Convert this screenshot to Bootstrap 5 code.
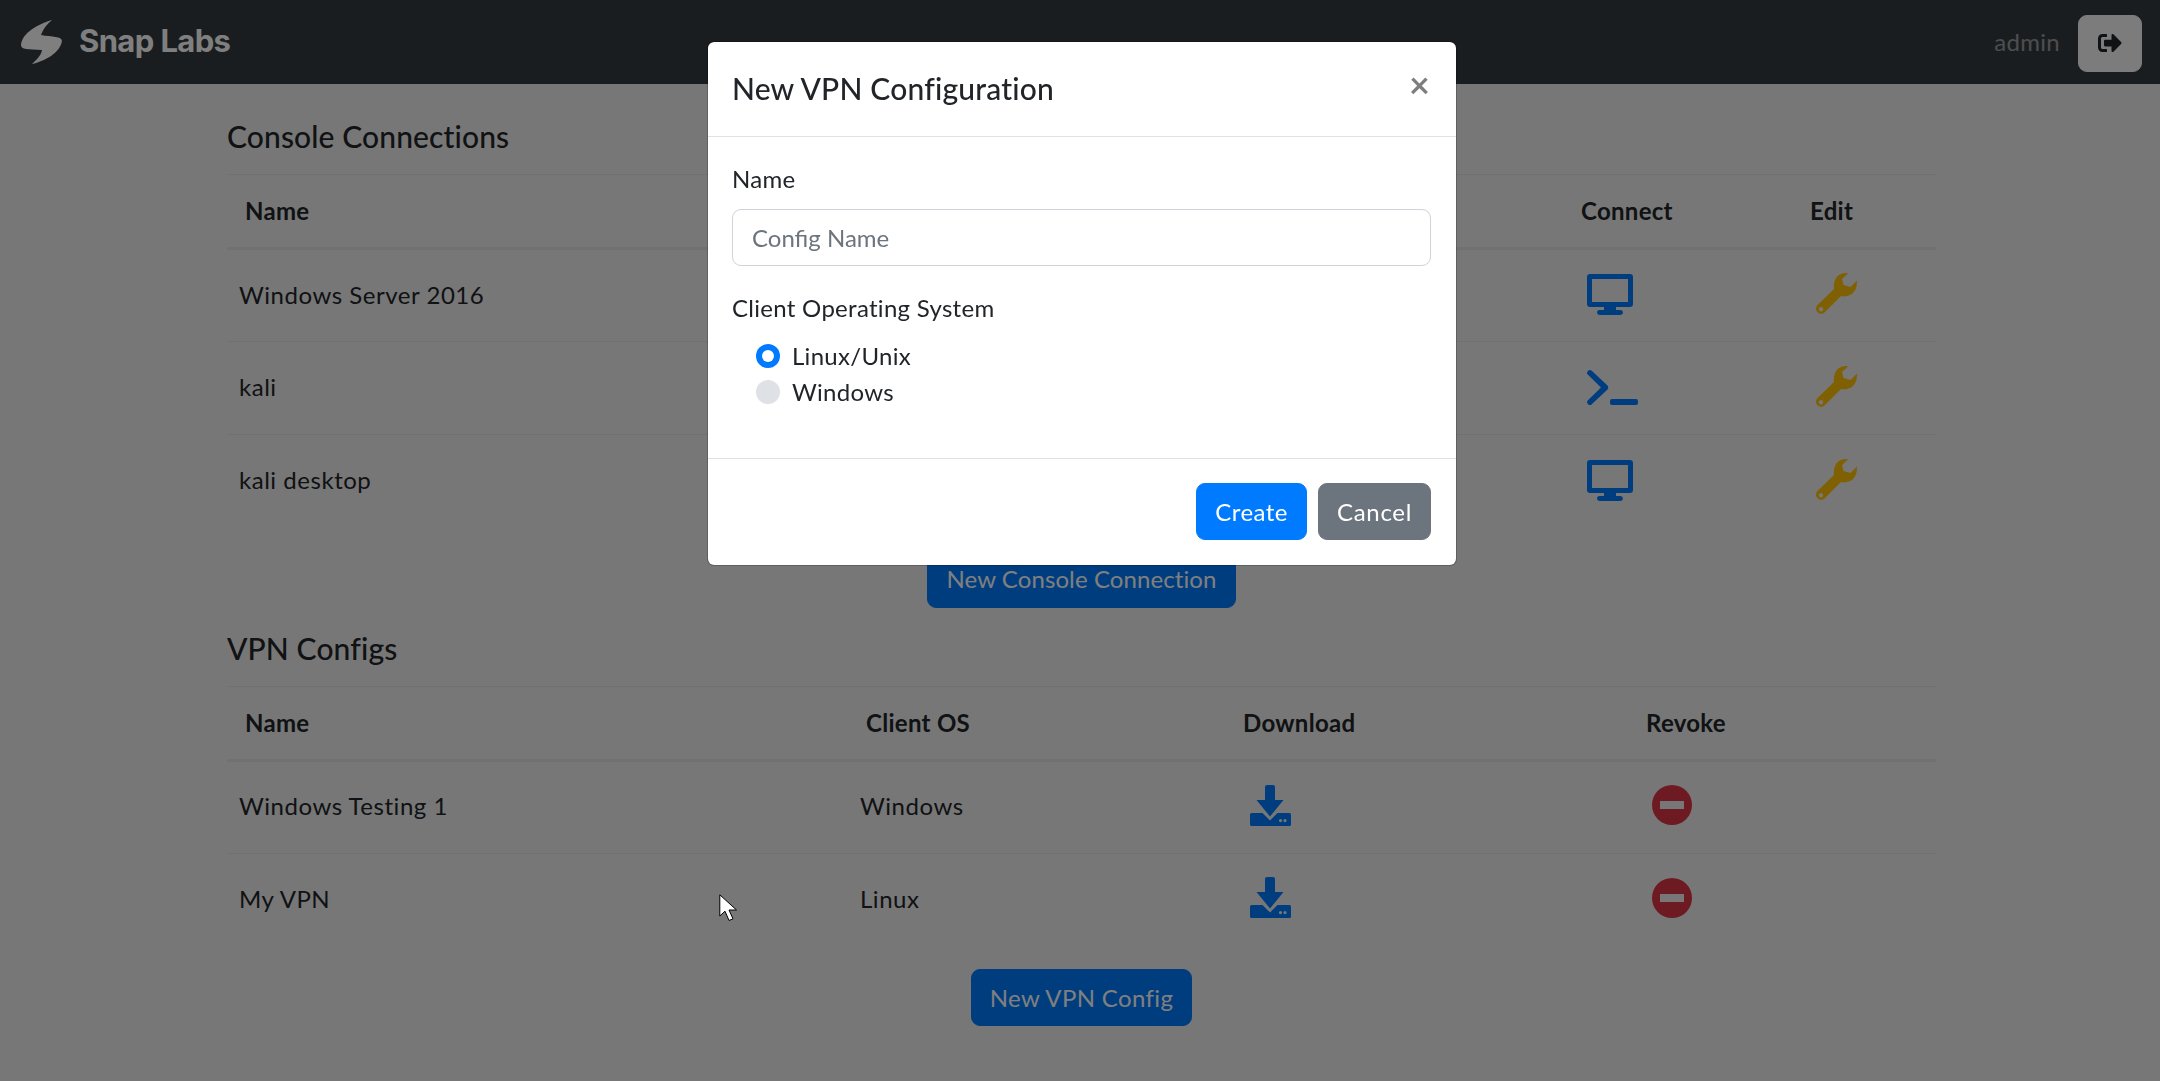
<!DOCTYPE html>
<html lang="en">
<head>
<meta charset="utf-8">
<title>Snap Labs</title>
<link href="https://cdn.jsdelivr.net/npm/bootstrap@5.3.0/dist/css/bootstrap.min.css" rel="stylesheet">
<style>
html{font-size:24px}
:root{--bs-body-color:#212529;--bs-body-font-family:"Lato","Noto Sans",sans-serif;--bs-border-radius:.25rem;--bs-border-radius-lg:.3rem}
body{background:#eee;color:#212529;overflow:hidden;letter-spacing:.012em}
.topbar{background:#343a40;height:84px;padding:3px 18px 0 18px}
.brand-link{color:#fff;font-family:"Inter",sans-serif;font-weight:700;font-size:31px;letter-spacing:-.02em;text-decoration:none;gap:13px;margin-bottom:4px}
.brand-mark{width:48px;height:48px;display:block;margin-top:-3px}
.who{color:rgba(255,255,255,.5);margin-right:18px;margin-bottom:4px}
.btn{--bs-btn-padding-y:calc(.375rem + .5px);letter-spacing:.015em}
.btn-tight{letter-spacing:.004em}
.btn-out{padding-left:19px;padding-right:19px;background:#f8f9fa;border-color:#f8f9fa;letter-spacing:0}
.btn-out svg{width:24px;height:24px;display:inline-block;vertical-align:-.09em;fill:#212529}
.btn-primary{--bs-btn-bg:#007bff;--bs-btn-border-color:#007bff}
.btn-secondary{--bs-btn-bg:#6c757d;--bs-btn-border-color:#6c757d}
.pagebox{width:1709px;margin-left:227px;padding-top:30px}
.sect-title{margin-bottom:15px;line-height:1.5;letter-spacing:.004em}
.conn-tbl{table-layout:fixed;margin-bottom:23px;--bs-table-bg:transparent;--bs-table-color:#212529;--bs-table-border-color:#dee2e6}
.conn-tbl>thead>tr>th{padding:18px;border-top:1px solid #dee2e6;border-bottom:3px solid #dee2e6;font-weight:700}
.conn-tbl>tbody>tr>td{padding:0 12px 2px;height:93px;vertical-align:middle;letter-spacing:.022em}
.conn-tbl>tbody>tr:last-child>td{border-bottom:0}
.ico{display:block;margin-left:12px}
.i-blue{fill:#007bff}
.i-amber{fill:#ffc107}
.i-red{fill:#dc3545}
.i-shift{margin-left:13px}
.i-up{margin-top:-2px}
.c-con1{width:1336px}.c-con2{width:229px}.c-con3{width:144px}
.c-vpn1{width:621px}.c-vpn2{width:377px}.c-vpn3{width:403px}.c-vpn4{width:308px}
.next-block{margin-top:18px}
.modal{padding-left:4px}
.modal-dialog{--bs-modal-width:750px;margin-top:41px}
.modal-content{--bs-modal-bg:#fff;--bs-modal-border-color:rgba(0,0,0,.2)}
.modal-header{padding-bottom:25px}
.modal-title{letter-spacing:.006em}
.modal-body{padding-right:25px}
.modal-footer{padding-right:19px;padding-bottom:19px}
.modal-footer .btn{letter-spacing:.028em}
.modal-footer .btn-primary{letter-spacing:.02em;margin-right:5px}
.x-close{font-size:36px;font-weight:700;line-height:1;color:#000;opacity:.5;background:none;border:0;padding:0;margin:0 2px 0 auto;position:relative;top:-5px}
.form-control{padding:calc(.375rem + .5px) 18px calc(.375rem + .5px) 19px;border-color:#ced4da;background:#fff}
.form-control::placeholder{color:#6c757d}
.form-label{margin-bottom:12px}
.form-check{margin-bottom:0}
.form-check-input{border:0;background-color:#dee2e6}
.form-check-input:checked{background-color:#007bff;border:0}
.pointer{position:fixed;left:719px;top:894px;z-index:2000;width:19px;height:29px}
</style>
</head>
<body>
<nav class="navbar topbar d-flex align-items-center justify-content-between">
  <a class="brand-link d-flex align-items-center" href="#">
    <svg class="brand-mark" viewBox="18 15 48 48" aria-hidden="true"><path fill="#fff" d="M52 19C38 23 22 32 21 44C21 49 28 48 42 49C41 55 36 59 32 63C45 60 60 52 62 40C62 35 52 36 41 34C43 28 47 23 52 19Z"/></svg>
    <span>Snap Labs</span>
  </a>
  <div class="d-flex align-items-center">
    <span class="who">admin</span>
    <button class="btn btn-out" type="button" aria-label="Log out">
      <svg viewBox="0 0 512 512" aria-hidden="true"><path d="M497 273L329 441c-15 15-41 4.500-41-17v-96H152c-13.300 0-24-10.700-24-24v-96c0-13.300 10.700-24 24-24h136V88c0-21.400 25.900-32 41-17l168 168c9.300 9.400 9.300 24.600 0 34zM192 436v-40c0-6.600-5.400-12-12-12H96c-17.700 0-32-14.300-32-32V160c0-17.700 14.300-32 32-32h84c6.600 0 12-5.400 12-12V76c0-6.600-5.400-12-12-12H96c-53 0-96 43-96 96v192c0 53 43 96 96 96h84c6.600 0 12-5.400 12-12z"/></svg>
    </button>
  </div>
</nav>

<svg width="0" height="0" class="d-block" aria-hidden="true">
  <defs>
    <symbol id="i-desktop" viewBox="0 0 46 41"><path fill-rule="evenodd" d="M3 0H43A3 3 0 0 1 46 3V30A3 3 0 0 1 43 33H29V36H33.500A2.500 2.500 0 0 1 33.500 41H12.500A2.500 2.500 0 0 1 12.500 36H17V33H3A3 3 0 0 1 0 30V3A3 3 0 0 1 3 0ZM5 5V28H41V5Z"/></symbol>
    <symbol id="i-term" viewBox="0 0 51 35"><path d="M4.500.6L20.500 15.600C21.500 16.600 21.500 18.400 20.500 19.400L4.500 34.400C3.500 35.300 2.300 35.300 1.400 34.400L.6 33.500C-.2 32.600-.2 31.400.7 30.500L14 17.500.7 4.500C-.2 3.600-.2 2.400.6 1.500L1.400.6C2.300-.2 3.500-.2 4.500.6ZM25 29H49A2 2 0 0 1 51 31V33A2 2 0 0 1 49 35H25A2 2 0 0 1 23 33V31A2 2 0 0 1 25 29Z"/></symbol>
    <symbol id="i-wrench" viewBox="0 0 41 41"><path fill-rule="evenodd" d="M30 0C22 0 17 6 18 16L1.500 32C-1 35 0 38 2 39.500C4 41.500 7 41 9 39L25 23C34 25 41 19 41 9L41 7.500L34.500 14L27.500 12L26 6L32 .5C31.500.2 31 0 30 0ZM5 34A2.200 2.200 0 1 1 5 38.400A2.200 2.200 0 1 1 5 34Z"/></symbol>
    <symbol id="i-down" viewBox="0 0 41 41"><path d="M17 0H23A2 2 0 0 1 25 2V15H33.500L20 31.500 6.500 15H15V2A2 2 0 0 1 17 0Z"/><path fill-rule="evenodd" d="M1.500 28H12.500L20 35.500 27.500 28H39.500A1.500 1.500 0 0 1 41 29.500V39.500A1.500 1.500 0 0 1 39.500 41H1.500A1.500 1.500 0 0 1 0 39.500V29.500A1.500 1.500 0 0 1 1.500 28ZM30.500 34A1.600 1.600 0 1 0 30.500 37.200A1.600 1.600 0 1 0 30.500 34ZM35 34A1.600 1.600 0 1 0 35 37.200A1.600 1.600 0 1 0 35 34Z"/></symbol>
    <symbol id="i-block" viewBox="0 0 40 40"><path fill-rule="evenodd" d="M20 0A20 20 0 1 1 20 40A20 20 0 1 1 20 0ZM8 16V24H32V16Z"/></symbol>
  </defs>
</svg>

<main class="pagebox">
  <h5 class="sect-title">Console Connections</h5>
  <table class="table conn-tbl">
    <colgroup><col class="c-con1"><col class="c-con2"><col class="c-con3"></colgroup>
    <thead><tr><th>Name</th><th>Connect</th><th>Edit</th></tr></thead>
    <tbody>
      <tr><td>Windows Server 2016</td><td><svg class="ico i-blue" width="46" height="41"><use href="#i-desktop"/></svg></td><td><svg class="ico i-up i-amber" width="41" height="41"><use href="#i-wrench"/></svg></td></tr>
      <tr><td>kali</td><td><svg class="ico i-blue" width="51" height="35"><use href="#i-term"/></svg></td><td><svg class="ico i-up i-amber" width="41" height="41"><use href="#i-wrench"/></svg></td></tr>
      <tr><td>kali desktop</td><td><svg class="ico i-blue" width="46" height="41"><use href="#i-desktop"/></svg></td><td><svg class="ico i-up i-amber" width="41" height="41"><use href="#i-wrench"/></svg></td></tr>
    </tbody>
  </table>
  <div class="text-center"><button class="btn btn-primary btn-tight" type="button">New Console Connection</button></div>

  <h5 class="sect-title next-block">VPN Configs</h5>
  <table class="table conn-tbl">
    <colgroup><col class="c-vpn1"><col class="c-vpn2"><col class="c-vpn3"><col class="c-vpn4"></colgroup>
    <thead><tr><th>Name</th><th>Client OS</th><th>Download</th><th>Revoke</th></tr></thead>
    <tbody>
      <tr><td>Windows Testing 1</td><td>Windows</td><td><svg class="ico i-shift i-up i-blue" width="41" height="41"><use href="#i-down"/></svg></td><td><svg class="ico i-up i-red" width="40" height="40"><use href="#i-block"/></svg></td></tr>
      <tr><td>My VPN</td><td>Linux</td><td><svg class="ico i-shift i-up i-blue" width="41" height="41"><use href="#i-down"/></svg></td><td><svg class="ico i-up i-red" width="40" height="40"><use href="#i-block"/></svg></td></tr>
    </tbody>
  </table>
  <div class="text-center"><button class="btn btn-primary" type="button">New VPN Config</button></div>
</main>

<div class="modal-backdrop show"></div>
<div class="modal show d-block" tabindex="-1" role="dialog" aria-modal="true">
  <div class="modal-dialog">
    <div class="modal-content">
      <div class="modal-header">
        <h5 class="modal-title">New VPN Configuration</h5>
        <button class="x-close" type="button" aria-label="Close">×</button>
      </div>
      <div class="modal-body">
        <div class="mb-3">
          <label class="form-label" for="cfg">Name</label>
          <input class="form-control" id="cfg" type="text" placeholder="Config Name">
        </div>
        <div class="mb-3">
          <label class="form-label">Client Operating System</label>
          <div class="ps-3">
            <div class="form-check"><input class="form-check-input" type="radio" name="os" id="os1" checked><label class="form-check-label" for="os1">Linux/Unix</label></div>
            <div class="form-check"><input class="form-check-input" type="radio" name="os" id="os2"><label class="form-check-label" for="os2">Windows</label></div>
          </div>
        </div>
      </div>
      <div class="modal-footer">
        <button class="btn btn-primary" type="button">Create</button>
        <button class="btn btn-secondary" type="button">Cancel</button>
      </div>
    </div>
  </div>
</div>

<svg class="pointer" viewBox="0 0 19 29" aria-hidden="true"><path fill="#fff" stroke="#000" stroke-width="1" d="M.8.8V22L6 17.200 10 26.500 14 24.800 10 16H17.500Z"/></svg>
</body>
</html>
